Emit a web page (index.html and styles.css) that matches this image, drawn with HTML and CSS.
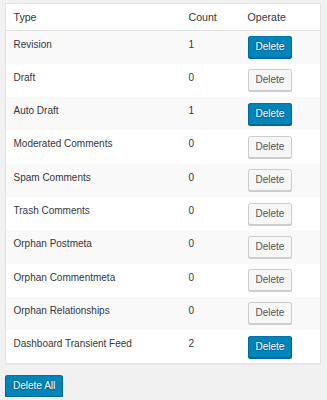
FILE: index.html
```html
<!DOCTYPE html>
<html>
<head>
<meta charset="utf-8">
<link rel="stylesheet" href="styles.css">
</head>
<body>
<div class="wrap">
  <table class="widefat">
    <colgroup>
      <col class="c-type">
      <col class="c-count">
      <col class="c-op">
    </colgroup>
    <thead>
      <tr><th>Type</th><th>Count</th><th>Operate</th></tr>
    </thead>
    <tbody>
      <tr class="alt"><td>Revision</td><td>1</td><td><button class="btn primary">Delete</button></td></tr>
      <tr><td>Draft</td><td>0</td><td><button class="btn">Delete</button></td></tr>
      <tr class="alt"><td>Auto Draft</td><td>1</td><td><button class="btn primary">Delete</button></td></tr>
      <tr><td>Moderated Comments</td><td>0</td><td><button class="btn">Delete</button></td></tr>
      <tr class="alt"><td>Spam Comments</td><td>0</td><td><button class="btn">Delete</button></td></tr>
      <tr><td>Trash Comments</td><td>0</td><td><button class="btn">Delete</button></td></tr>
      <tr class="alt"><td>Orphan Postmeta</td><td>0</td><td><button class="btn">Delete</button></td></tr>
      <tr><td>Orphan Commentmeta</td><td>0</td><td><button class="btn">Delete</button></td></tr>
      <tr class="alt"><td>Orphan Relationships</td><td>0</td><td><button class="btn">Delete</button></td></tr>
      <tr><td>Dashboard Transient Feed</td><td>2</td><td><button class="btn primary">Delete</button></td></tr>
    </tbody>
  </table>
  <div class="actions">
    <button class="btn primary">Delete All</button>
  </div>
</div>
</body>
</html>
```
FILE: styles.css
```css
html, body {
  margin: 0;
  padding: 0;
  background: #f1f1f1;
}
body {
  font-family: "Liberation Sans", Arial, sans-serif;
  color: #32373c;
  font-size: 10px;
}
.wrap {
  padding: 3px 6px 0 5px;
}
.widefat {
  width: 316px;
  border-collapse: collapse;
  border-spacing: 0;
  table-layout: fixed;
  background: #fff;
  border: 1px solid #e5e5e5;
  box-shadow: 0 1px 1px rgba(0,0,0,.04);
}
.c-type { width: 175.5px; }
.c-count { width: 59px; }
.c-op { width: auto; }
.widefat th {
  text-align: left;
  font-weight: 400;
  font-size: 10.6px;
  line-height: 14.7px;
  height: 26px;
  box-sizing: border-box;
  padding: 6px 7px 5px 7.5px;
  vertical-align: top;
  border-bottom: 1px solid #e1e1e1;
  color: #32373c;
}
.widefat td {
  font-size: 10px;
  line-height: 14.6px;
  height: 33.33px;
  box-sizing: border-box;
  padding: 7px 7px 0 7.5px;
  vertical-align: top;
}
.widefat td:last-child {
  padding-top: 0;
  vertical-align: middle;
}
.widefat tr.alt td {
  background: #f9f9f9;
}
.btn {
  display: inline-block;
  box-sizing: border-box;
  height: 22px;
  line-height: 20px;
  padding: 0 7px 1px;
  margin: 0;
  font-family: "Liberation Sans", Arial, sans-serif;
  font-size: 10px;
  border-radius: 2.5px;
  border: 1px solid #ccc;
  background: #f7f7f7;
  color: #555;
  box-shadow: 0 1px 0 #ccc;
  white-space: nowrap;
  vertical-align: top;
  cursor: pointer;
}
.btn.primary {
  background: #0085ba;
  border-color: #0073aa #006799 #006799;
  color: #fff;
  box-shadow: 0 1px 0 #006799;
  text-shadow: 0 -1px 1px #006799, 1px 0 1px #006799, 0 1px 1px #006799, -1px 0 1px #006799, 0.3px 0 0 #fff;
}
.actions {
  padding-top: 11px;
}
```
